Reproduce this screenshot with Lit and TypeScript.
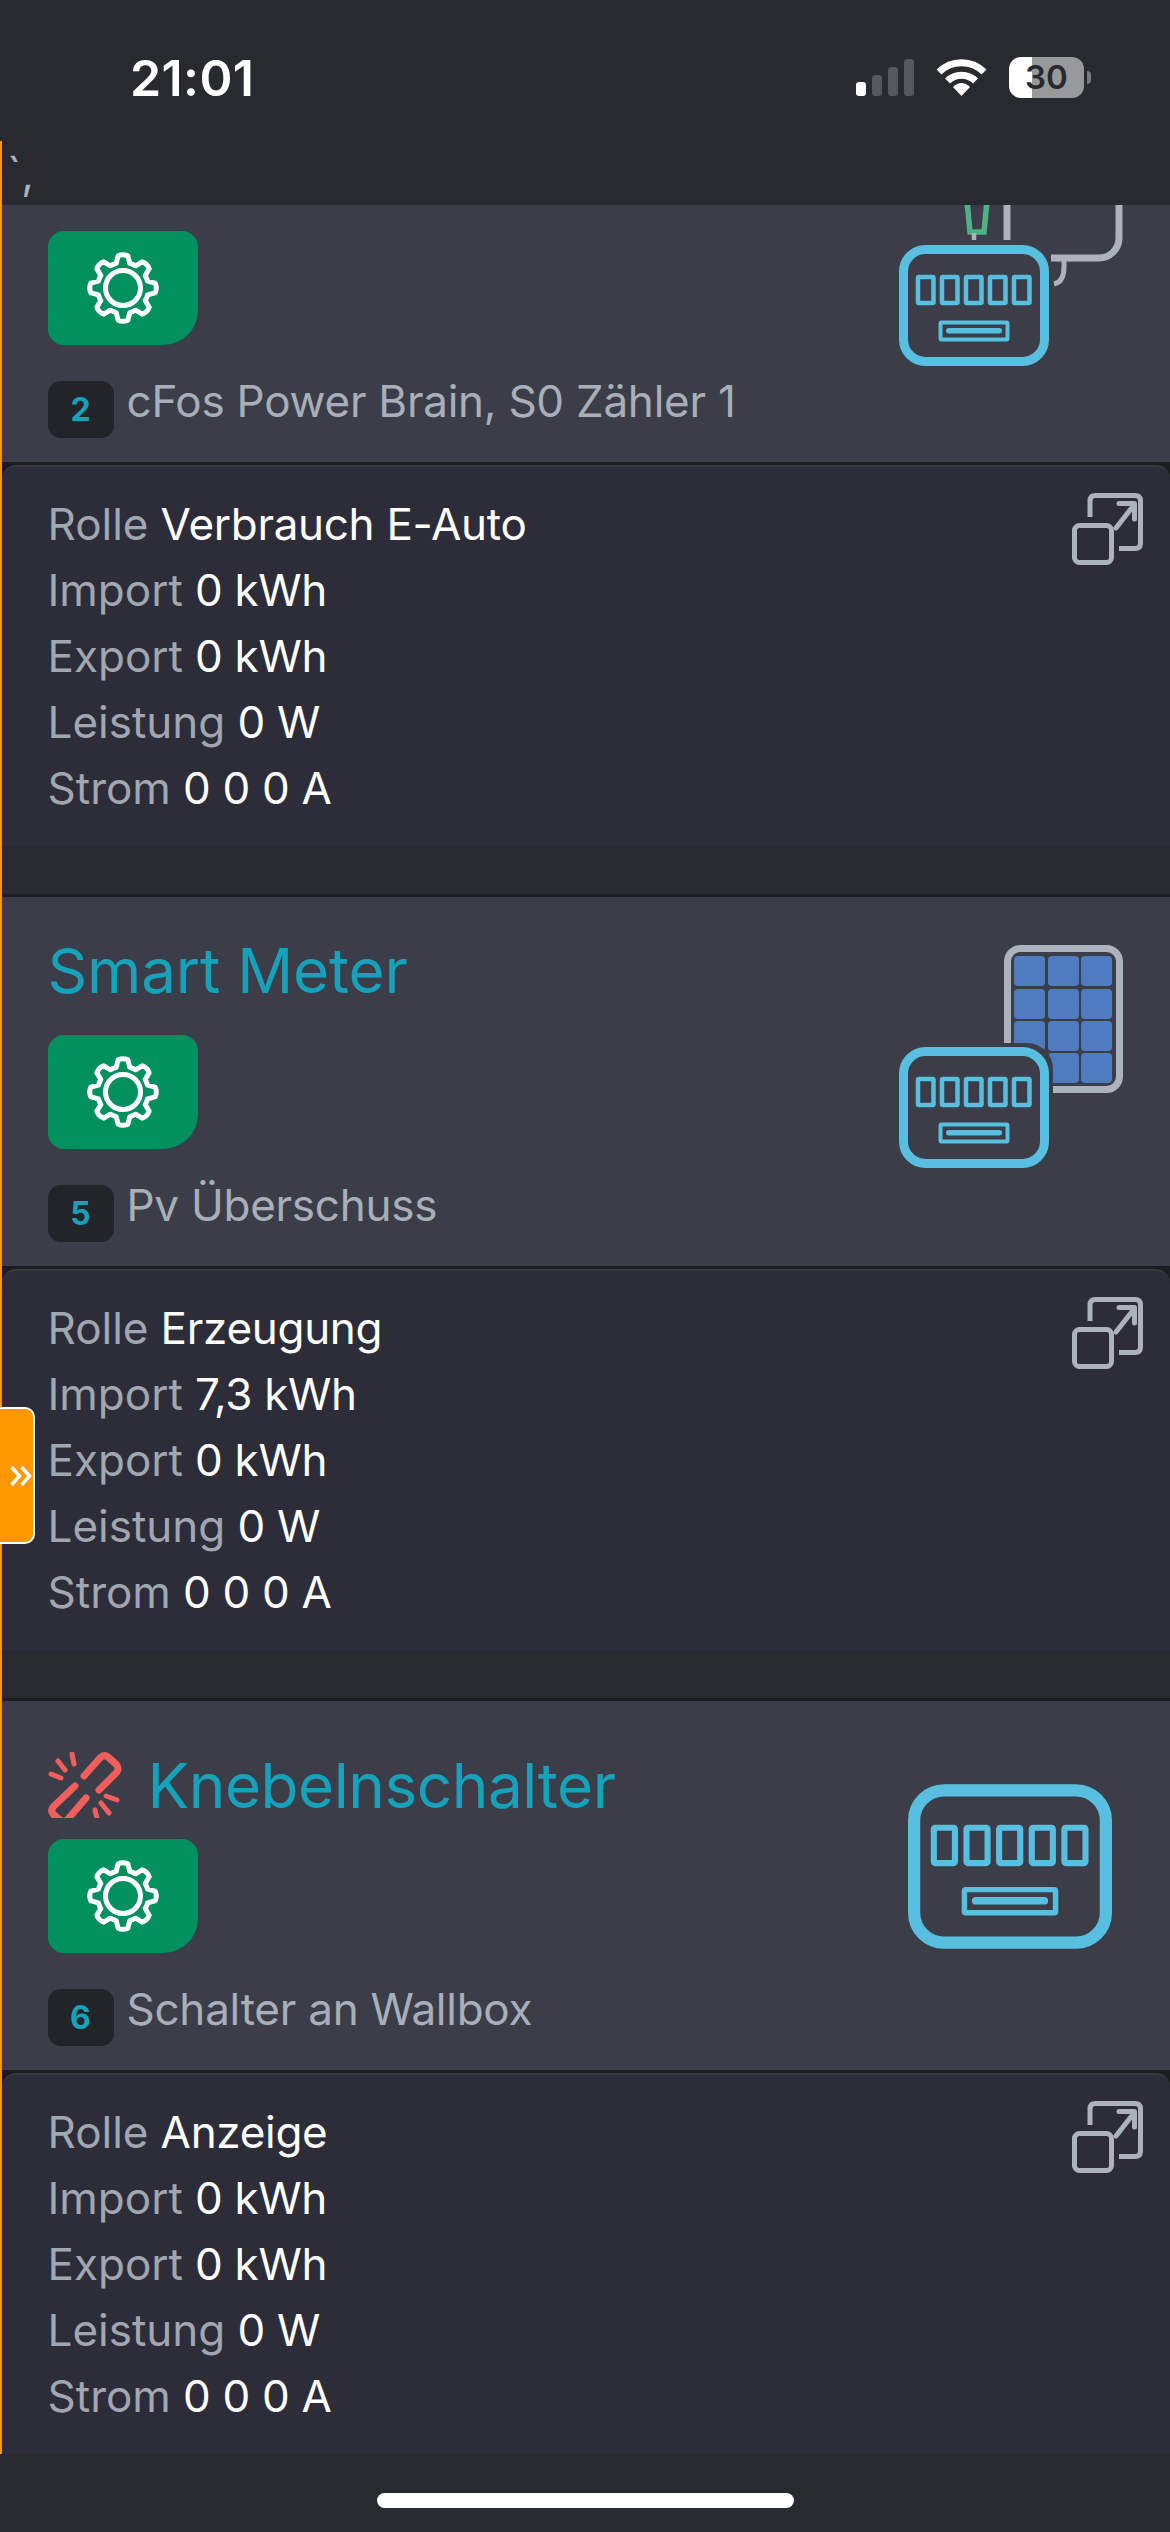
import { LitElement, html, css, svg } from "lit";
import { customElement, property } from "lit/decorators.js";

const gearPath = (() => {
  const c = 36, n = 8, R1 = 25.5, R2 = 33.5, d1 = 0.27, d2 = 0.15;
  const pt = (r: number, a: number) => `${(c + r * Math.cos(a)).toFixed(2)} ${(c + r * Math.sin(a)).toFixed(2)}`;
  let p = "";
  for (let i = 0; i < n; i++) {
    const a = (i * 2 * Math.PI) / n - Math.PI / 2;
    p += `${i ? "A" + R1 + " " + R1 + " 0 0 1 " : "M"}${pt(R1, a - d1)}L${pt(R2 - 1, a - d2)}Q${pt(R2 + 1, a)} ${pt(R2 - 1, a + d2)}L${pt(R1, a + d1)}`;
  }
  const a0 = -Math.PI / 2 - d1;
  return p + `A${R1} ${R1} 0 0 1 ${pt(R1, a0)}Z`;
})();

const meter = () => svg`
  <g fill="none" stroke="#59bfe0">
    <rect x="4.5" y="4.5" width="141" height="112" rx="22" stroke-width="9"/>
    ${[0, 1, 2, 3, 4].map((i) => svg`<rect x="${19 + i * 24}" y="32" width="15.5" height="26" rx="1" stroke-width="4.5"/>`)}
    <rect x="41.5" y="77.5" width="67" height="17" rx="1" stroke-width="4"/>
  </g>
  <rect x="47" y="83" width="56" height="5.5" rx="2.7" fill="#59bfe0"/>`;

@customElement("card-item")
class CardItem extends LitElement {
  @property() heading = "";
  @property() badge = "";
  @property() desc = "";
  @property() role = "";
  @property() imp = "0";
  @property() variant = "";

  static styles = css`
    :host { display: block; border-top: 3px solid #1c1d21; margin-bottom: 48px; }
    :host(.first) { border-top: 0; }
    .head { display: flex; justify-content: space-between; align-items: flex-start; background: #3b3e48; height: 369px; overflow: hidden; padding-left: 45.5px; box-sizing: border-box; }
    :host(.first) .head { height: 257px; }
    .left { padding-top: 48px; min-width: 0; }
    :host(.first) .left { padding-top: 26px; }
    .title { display: flex; align-items: center; gap: 26px; height: 74px; margin-bottom: 16px; font-size: 62px; line-height: 74px; color: #16a2ba; white-space: nowrap; letter-spacing: -0.45px; }
    .title.bare { margin-top: -11px; margin-bottom: 27px; letter-spacing: -0.2px; }
    .link { width: 74px; height: 66px; margin-top: -2px; flex: none; }
    .btn { width: 150px; height: 114px; background: #03905f; border-radius: 16px 16px 35px 16px; display: flex; align-items: center; justify-content: center; margin-bottom: 23px; }
    .btn svg { width: 72px; height: 72px; display: block; }
    .row { display: flex; align-items: flex-start; gap: 13px; }
    .badge { width: 66px; height: 57px; margin-top: 13px; border-radius: 13px; background: #212429; color: #16a2ba; font-size: 32px; font-weight: 700; line-height: 57px; text-align: center; flex: none; }
    .desc { font-size: 44px; line-height: 66px; color: #a9afb9; white-space: nowrap; letter-spacing: -0.25px; }
    .pic { flex: none; display: block; margin-right: 39px; }
    .pic.big { margin: 83px 58px 0 0; }
    .rule { height: 3px; background: #1c1d21; }
    .body { display: flex; justify-content: space-between; align-items: flex-start; background: #2c2d38; border-top: 2px solid #363842; border-radius: 14px 14px 0 0; padding: 24px 26px 25px 45.5px; height: 330px; }
    .wrap { background: #1c1d21; }
    .line { font-size: 44px; line-height: 66px; color: #fff; white-space: nowrap; letter-spacing: -0.3px; }
    .line span { color: #a0a7b1; letter-spacing: 0; }
    .expand { width: 72px; height: 72px; margin-top: 2px; flex: none; display: block; }
  `;

  private pic() {
    if (this.variant === "wired") {
      return html`<svg class="pic" width="240" height="170" viewBox="0 0 240 170">
        <g fill="none">
          <path d="M76 -4 L79 27 H93 L96 -4" stroke="#4fb286" stroke-width="5.5"/>
          <path d="M83 28 V35" stroke="#adb2bb" stroke-width="4.5"/>
          <path d="M116 0 V35" stroke="#adb2bb" stroke-width="7"/>
          <path d="M228 0 V33 A20 20 0 0 1 208 53 H160" stroke="#adb2bb" stroke-width="7"/>
          <path d="M173 53 V62 Q173 77 163 79" stroke="#adb2bb" stroke-width="5"/>
        </g>
        <g transform="translate(8 40)">${meter()}</g>
      </svg>`;
    }
    if (this.variant === "solar") {
      const xs = [123, 157, 190], ys = [59, 92, 124, 156];
      return html`<svg class="pic" width="240" height="280" viewBox="0 0 240 280">
        <rect x="116.5" y="51.5" width="112" height="141" rx="13" fill="none" stroke="#adb3bc" stroke-width="7"/>
        ${ys.map((y) => xs.map((x) => svg`<rect x="${x}" y="${y}" width="31" height="30" rx="4" fill="#4f7bc0"/>`))}
        <rect x="4" y="146" width="158" height="130" rx="26" fill="#3b3e48"/>
        <g transform="translate(8 150)">${meter()}</g>
      </svg>`;
    }
    return html`<svg class="pic big" width="204" height="165" viewBox="0 0 150 121">${meter()}</svg>`;
  }

  render() {
    const withLink = this.variant === "plain";
    return html`
      <div class="head">
        <div class="left">
          ${this.heading
            ? html`<div class="title ${withLink ? "" : "bare"}">
                ${withLink
                  ? html`<svg class="link" viewBox="0 0 74 66" fill="none" stroke="#f15f5c" stroke-width="7" stroke-linecap="round">
                      <path d="M36 24 L52 6 Q56 2 60 5 L68 12 Q72 17 68 21 L51 38"/>
                      <path d="M27 34 L6 54 Q2 58 5 62 L12 68 Q16 71 20 67 L38 46"/>
                      <path stroke-width="5" d="M24 2 L26 12M10 9 L17 18M3 22 L13 26M58 44 L69 48M53 51 L61 61M47 58 L49 66"/>
                    </svg>`
                  : ""}
                <span>${this.heading}</span>
              </div>`
            : ""}
          <div class="btn">
            <svg viewBox="0 0 72 72" fill="none" stroke="#fff" stroke-width="5" stroke-linejoin="round">
              <path d="${gearPath}"/>
              <circle cx="36" cy="36" r="17.5"/>
            </svg>
          </div>
          <div class="row"><div class="badge">${this.badge}</div><div class="desc">${this.desc}</div></div>
        </div>
        ${this.pic()}
      </div>
      <div class="rule"></div>
      <div class="wrap">
        <div class="body">
          <div>
            <div class="line"><span>Rolle</span> ${this.role}</div>
            <div class="line"><span>Import</span> ${this.imp} kWh</div>
            <div class="line"><span>Export</span> 0 kWh</div>
            <div class="line"><span>Leistung</span> 0 W</div>
            <div class="line"><span>Strom</span> 0 0 0 A</div>
          </div>
          <svg class="expand" viewBox="0 0 72 72" fill="none" stroke="#adb3bc" stroke-width="5" stroke-linecap="round" stroke-linejoin="round">
            <rect x="2.5" y="32.5" width="37" height="37" rx="5"/>
            <path d="M18 24 V8 Q18 2.5 23.500 2.500 H63 Q68.500 2.500 68.500 8 V50 Q68.500 55.500 63 55.500 H47" stroke-linecap="butt"/>
            <path d="M44 35 L62 12 M47 10.500 H62.500 V26"/>
          </svg>
        </div>
      </div>
    `;
  }
}

@customElement("app-root")
class AppRoot extends LitElement {
  static styles = css`
    :host { display: block; width: 1170px; height: 2532px; overflow: hidden; position: relative; background: #272a2f; font-family: Inter, "Liberation Sans", sans-serif; }
    .status { height: 141px; box-sizing: border-box; padding: 46px 86px 0 130px; display: flex; justify-content: space-between; align-items: flex-start; }
    .time { font-size: 50px; line-height: 64px; font-weight: 600; color: #fff; letter-spacing: 0.4px; }
    .icons { display: flex; align-items: flex-start; }
    .signal { margin-top: 13px; margin-right: 22px; display: block; }
    .wifi { margin-top: 13px; margin-right: 22px; display: block; }
    .batt { position: relative; width: 75px; height: 41px; margin-top: 11px; border-radius: 12px; background: linear-gradient(90deg, #fff 0 23px, #98999b 23px); color: #272a2f; font-size: 33px; line-height: 41px; font-weight: 600; text-align: center; }
    .batt::after { content: ""; position: absolute; right: -7px; top: 14px; width: 4px; height: 13px; border-radius: 0 6px 6px 0; background: #77797c; }
    .page { border-left: 2.5px solid #ff9800; }
    .code { height: 64px; padding-left: 5px; color: #adb3bc; font-size: 44px; line-height: 64px; box-sizing: border-box; }
    .tab { position: absolute; left: -3px; top: 1407px; height: 137px; width: 38px; background: #ff9800; border: 2px solid #fff; border-radius: 0 10px 10px 0; display: flex; align-items: center; justify-content: flex-start; padding-left: 11px; box-sizing: border-box; }
    .tab svg { display: block; }
    .home { position: absolute; left: 377px; top: 2493px; width: 417px; height: 15px; border-radius: 8px; background: #fff; }
  `;

  render() {
    return html`
      <div class="status">
        <div class="time">21:01</div>
        <div class="icons">
          <svg class="signal" width="58" height="37" viewBox="0 0 58 37">
            <rect x="0" y="23" width="10" height="14" rx="3" fill="#fff"/>
            <rect x="16" y="16" width="10" height="21" rx="3" fill="#54575c"/>
            <rect x="32" y="8" width="10" height="29" rx="3" fill="#54575c"/>
            <rect x="48" y="0" width="10" height="37" rx="3" fill="#54575c"/>
          </svg>
          <svg class="wifi" width="51" height="37" viewBox="0 0 51 37">
            <path d="M3 13 A32 32 0 0 1 48 13 M11.500 22 A20 20 0 0 1 39.500 22" fill="none" stroke="#fff" stroke-width="7"/>
            <path d="M17 28 Q25.500 20 34 28 L25.500 37 Z" fill="#fff"/>
          </svg>
          <div class="batt">30</div>
        </div>
      </div>
      <div class="page">
        <div class="code">\`,</div>
        <card-item class="first" badge="2" desc="cFos Power Brain, S0 Zähler 1" role="Verbrauch E-Auto" variant="wired"></card-item>
        <card-item heading="Smart Meter" badge="5" desc="Pv Überschuss" role="Erzeugung" imp="7,3" variant="solar"></card-item>
        <card-item heading="Knebelnschalter" badge="6" desc="Schalter an Wallbox" role="Anzeige" variant="plain"></card-item>
      </div>
      <div class="tab">
        <svg width="22" height="22" viewBox="0 0 22 22" fill="none" stroke="#fff" stroke-width="3.500">
          <path d="M1.500 2 L9.500 11 L1.500 20 M11.500 2 L19.500 11 L11.500 20"/>
        </svg>
      </div>
      <div class="home"></div>
    `;
  }
}
